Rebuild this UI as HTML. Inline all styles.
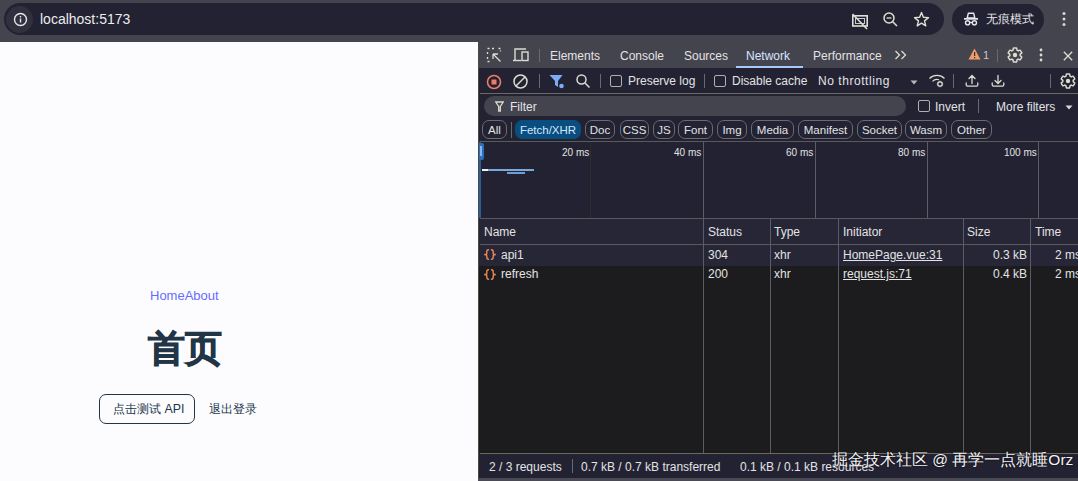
<!DOCTYPE html>
<html><head><meta charset="utf-8">
<style>
*{margin:0;padding:0;box-sizing:border-box}
html,body{width:1078px;height:481px;overflow:hidden}
body{position:relative;background:#44444f;font-family:"Liberation Sans",sans-serif;color:#e3e3e3}
.a{position:absolute}
.t{position:absolute;white-space:nowrap;line-height:1}
/* top bar */
#omni{left:4px;top:3px;width:940px;height:32px;border-radius:16px;background:#222233}
#incog{left:952px;top:4px;width:92px;height:31px;border-radius:16px;background:#222233}
/* page */
#page{left:0;top:42px;width:478px;height:439px;background:#fcfcff;color:#213547}
.vl{position:absolute;width:1px;background:#5c5c66}
.chip{position:absolute;top:78px;height:19px;border:1px solid #6a6a70;border-radius:7px;font-size:11.5px;line-height:19px;text-align:center;color:#e3e3e3}
.dt{font-size:12px}
</style></head>
<body>
<!-- Browser toolbar -->
<div class="a" id="omni"></div>
<div class="a" style="left:6px;top:6px;width:27px;height:27px;border-radius:50%;background:#30303f"></div>
<svg class="a" style="left:13px;top:12px" width="15" height="15" viewBox="0 0 15 15"><circle cx="7.5" cy="7.5" r="6" fill="none" stroke="#e8e8e8" stroke-width="1.4"/><rect x="6.8" y="6.5" width="1.4" height="4" fill="#e8e8e8"/><rect x="6.8" y="4" width="1.4" height="1.4" fill="#e8e8e8"/></svg>
<div class="t" style="left:40px;top:12px;font-size:14px;color:#ececec">localhost:5173</div>
<!-- omnibox right icons -->
<svg class="a" style="left:850px;top:12px" width="20" height="19" viewBox="0 0 20 19"><rect x="2.8" y="3.8" width="14.4" height="10.2" fill="none" stroke="#e0e0d0" stroke-width="1.6"/><rect x="5.5" y="6.5" width="9" height="5" fill="none" stroke="#c8c8d8" stroke-width="1"/><line x1="2.5" y1="2" x2="17" y2="17" stroke="#e0e0d0" stroke-width="1.6"/></svg>
<svg class="a" style="left:882px;top:11px" width="18" height="18" viewBox="0 0 18 18"><circle cx="7" cy="7" r="5" fill="none" stroke="#e0e0d0" stroke-width="1.5"/><line x1="10.5" y1="10.5" x2="15" y2="15" stroke="#e0e0d0" stroke-width="1.5"/><line x1="4.5" y1="7" x2="9.5" y2="7" stroke="#e0e0d0" stroke-width="1.3"/></svg>
<svg class="a" style="left:913px;top:11px" width="17" height="17" viewBox="0 0 17 17"><polygon points="8.5,1.5 10.4,6.3 15.5,6.6 11.5,9.9 12.8,14.9 8.5,12.1 4.2,14.9 5.5,9.9 1.5,6.6 6.6,6.3" fill="none" stroke="#e0e0d0" stroke-width="1.4" stroke-linejoin="round"/></svg>
<div class="a" id="incog"></div>
<svg class="a" style="left:963px;top:12px" width="16" height="14" viewBox="0 0 16 14"><path d="M5.3 1.3H10.7L11.8 6H4.2Z" fill="none" stroke="#e8e8f0" stroke-width="1.4" stroke-linejoin="round"/><rect x="1" y="6" width="14" height="1.7" fill="#e8e8f0"/><circle cx="4.6" cy="10.8" r="2.1" fill="none" stroke="#e8e8f0" stroke-width="1.4"/><circle cx="11.4" cy="10.8" r="2.1" fill="none" stroke="#e8e8f0" stroke-width="1.4"/><path d="M6.7 10.5h2.6" stroke="#e8e8f0" stroke-width="1.2"/></svg>
<div class="t" style="left:986px;top:13px;font-size:12px;color:#e8e8e8">无痕模式</div>
<svg class="a" style="left:1062px;top:11px" width="4" height="16" viewBox="0 0 4 16"><circle cx="2" cy="2.5" r="1.5" fill="#d8d8d8"/><circle cx="2" cy="8" r="1.5" fill="#d8d8d8"/><circle cx="2" cy="13.5" r="1.5" fill="#d8d8d8"/></svg>

<!-- Page -->
<div class="a" id="page">
  <div class="t" style="left:150px;top:247px;font-size:13px;color:#646cff">HomeAbout</div>
  <div class="t" style="left:148px;top:288px;font-size:37px;font-weight:bold;color:#213547;-webkit-text-stroke:0.9px #213547">首页</div>
  <div class="a" style="left:99px;top:352px;width:96px;height:30px;border:1.5px solid #213547;border-radius:7px;background:#fcfcff"></div>
  <div class="t" style="left:113px;top:361px;font-size:12.4px;color:#213547">点击测试 API</div>
  <div class="t" style="left:209px;top:361px;font-size:12.4px;color:#213547">退出登录</div>
</div>

<!-- DevTools -->
<div class="a" style="left:478px;top:42px;width:600px;height:439px;background:#1c1c1f"></div>
<!-- tab bar -->
<div class="a" style="left:478px;top:42px;width:600px;height:26px;background:#44444f"></div>
<div class="a" style="left:478px;top:42px;width:1px;height:439px;background:#4a4a40"></div>
<!-- toolbar/filter/chips/overview/header -->
<div class="a" style="left:479px;top:68px;width:599px;height:151px;background:#222233"></div>
<div class="a" style="left:479px;top:219px;width:599px;height:47px;background:#262636"></div>
<div class="a" style="left:479px;top:453px;width:599px;height:25px;background:#222233"></div>
<div class="a" style="left:478px;top:478px;width:600px;height:3px;background:#4a4a55"></div>
<!-- lines -->
<div class="a" style="left:480px;top:93px;width:598px;height:1px;background:#6a6a5a"></div>
<div class="a" style="left:480px;top:141px;width:598px;height:1px;background:#5a5a5a"></div>
<div class="a" style="left:480px;top:218px;width:598px;height:1px;background:#5a5a5a"></div>
<div class="a" style="left:480px;top:244px;width:598px;height:1px;background:#5a5a5a"></div>
<div class="a" style="left:480px;top:453px;width:598px;height:1px;background:#6a6a5a"></div>
<!-- filter pill -->
<div class="a" style="left:484px;top:96px;width:422px;height:20px;border-radius:10px;background:#44444f"></div>
<!-- tab bar content -->
<svg class="a" style="left:486px;top:47px" width="16" height="16" viewBox="0 0 16 16" fill="none" stroke="#dcdcd0" stroke-width="1.3"><path d="M1.5 1.5h2M6 1.5h2M1.5 5v2M1.5 10v2M1.5 14.5h2M12.5 1.5h2M14.5 3.5v1" stroke-dasharray="none"/><path d="M7 7l7.5 7.5M7 7h5M7 7v5"/></svg>
<svg class="a" style="left:512px;top:47px" width="18" height="16" viewBox="0 0 18 16" fill="none" stroke="#dcdcd0" stroke-width="1.4"><path d="M3 13V2h11"/><path d="M1 13.5h8"/><rect x="10" y="5" width="6" height="8.5"/></svg>
<div class="a" style="left:539px;top:49px;width:1px;height:13px;background:#6a6a6a"></div>
<div class="t dt" style="left:550px;top:50px">Elements</div>
<div class="t dt" style="left:620px;top:50px">Console</div>
<div class="t dt" style="left:684px;top:50px">Sources</div>
<div class="t dt" style="left:746px;top:50px;color:#d8e4ff">Network</div>
<div class="a" style="left:736px;top:66px;width:67px;height:2px;background:#a8c7fa"></div>
<div class="t dt" style="left:813px;top:50px">Performance</div>
<svg class="a" style="left:894px;top:50px" width="14" height="10" viewBox="0 0 14 10" fill="none" stroke="#dcdcd0" stroke-width="1.3"><path d="M1.5 1l4 4-4 4M7.5 1l4 4-4 4"/></svg>
<svg class="a" style="left:968px;top:48px" width="13" height="12" viewBox="0 0 13 12"><path d="M6.5 0.5L12.5 11.5H0.5Z" fill="#f29b6b"/><rect x="6" y="4" width="1.2" height="4" fill="#3a2a20"/><rect x="6" y="9" width="1.2" height="1.2" fill="#3a2a20"/></svg>
<div class="t dt" style="left:983px;top:50px;font-size:11px;color:#c8c8c8">1</div>
<div class="a" style="left:997px;top:49px;width:1px;height:13px;background:#6a6a6a"></div>
<svg class="a" style="left:1007px;top:47px" width="16" height="16" viewBox="1 1 22 22" fill="none" stroke="#dcdcd0" stroke-width="2"><path d="M19.14,12.94c0.04-0.3,0.06-0.61,0.06-0.94c0-0.32-0.02-0.64-0.07-0.94l2.03-1.58c0.18-0.14,0.23-0.41,0.12-0.61l-1.92-3.32c-0.12-0.22-0.37-0.29-0.59-0.22l-2.39,0.96c-0.5-0.38-1.03-0.7-1.62-0.94L14.4,2.81c-0.04-0.24-0.24-0.41-0.48-0.41h-3.84c-0.24,0-0.43,0.17-0.47,0.41L9.25,5.35C8.66,5.59,8.12,5.92,7.63,6.29L5.24,5.330c-0.22-0.08-0.47,0-0.59,0.22L2.74,8.87C2.62,9.08,2.66,9.34,2.86,9.48l2.03,1.58C4.84,11.360,4.8,11.690,4.8,12s0.02,0.64,0.07,0.94l-2.03,1.58c-0.18,0.14-0.23,0.41-0.12,0.61l1.92,3.32c0.12,0.22,0.37,0.29,0.59,0.22l2.39-0.96c0.5,0.38,1.03,0.7,1.62,0.94l0.36,2.54c0.05,0.24,0.24,0.41,0.48,0.41h3.84c0.24,0,0.44-0.17,0.47-0.41l0.36-2.540c0.59-0.24,1.13-0.56,1.62-0.94l2.39,0.96c0.22,0.08,0.47,0,0.59-0.22l1.92-3.32c0.12-0.22,0.07-0.47-0.12-0.61L19.14,12.94z"/><circle cx="12" cy="12" r="3" fill="#dcdcd0" stroke="none"/></svg>
<svg class="a" style="left:1039px;top:48px" width="4" height="14" viewBox="0 0 4 14"><circle cx="2" cy="2" r="1.4" fill="#dcdcd0"/><circle cx="2" cy="7" r="1.4" fill="#dcdcd0"/><circle cx="2" cy="12" r="1.4" fill="#dcdcd0"/></svg>
<svg class="a" style="left:1063px;top:51px" width="10" height="10" viewBox="0 0 10 10" stroke="#dcdcd0" stroke-width="1.3"><path d="M0.8 0.8l8.4 8.4M9.2 0.8l-8.4 8.4"/></svg>

<!-- network toolbar -->
<svg class="a" style="left:486px;top:74px" width="16" height="16" viewBox="0 0 16 16"><circle cx="8" cy="8" r="6.5" fill="none" stroke="#ee7b66" stroke-width="1.6"/><rect x="5.5" y="5.5" width="5" height="5" rx="0.5" fill="#ee7b66"/></svg>
<svg class="a" style="left:512px;top:73px" width="17" height="17" viewBox="0 0 17 17" fill="none" stroke="#dcdcd0" stroke-width="1.5"><circle cx="8.5" cy="8.5" r="6.5"/><path d="M4 13L13 4"/></svg>
<div class="a" style="left:539px;top:74px;width:1px;height:14px;background:#6a6a6a"></div>
<svg class="a" style="left:549px;top:74px" width="16" height="15" viewBox="0 0 16 15"><path d="M0.5 1h13L9 7v6L6 11V7Z" fill="#7cacf8"/><circle cx="12.5" cy="12" r="2.3" fill="#7cacf8"/></svg>
<svg class="a" style="left:575px;top:73px" width="16" height="16" viewBox="0 0 16 16" fill="none" stroke="#dcdcd0" stroke-width="1.5"><circle cx="6.5" cy="6.5" r="4.5"/><path d="M10 10l4.5 4.5"/></svg>
<div class="a" style="left:600px;top:74px;width:1px;height:14px;background:#6a6a6a"></div>
<div class="a" style="left:610px;top:75px;width:12px;height:12px;border:1.5px solid #b0b0b0;border-radius:2px"></div>
<div class="t dt" style="left:628px;top:75px">Preserve log</div>
<div class="a" style="left:704px;top:74px;width:1px;height:14px;background:#6a6a6a"></div>
<div class="a" style="left:714px;top:75px;width:12px;height:12px;border:1.5px solid #b0b0b0;border-radius:2px"></div>
<div class="t dt" style="left:732px;top:75px">Disable cache</div>
<div class="t dt" style="left:818px;top:75px;letter-spacing:0.55px">No throttling</div>
<svg class="a" style="left:910px;top:80px" width="8" height="5" viewBox="0 0 8 5"><path d="M0.5 0.5h7L4 4.5Z" fill="#b8b8b8"/></svg>
<svg class="a" style="left:928px;top:73px" width="18" height="15" viewBox="0 0 18 15" fill="none" stroke="#dcdcd0" stroke-width="1.2"><path d="M1.5 5.5a10.5 10.5 0 0 1 15 0"/><path d="M4.5 8.3a6 6 0 0 1 6.5-1.5"/><circle cx="12" cy="11" r="2.2"/><path d="M12 7.8v1M12 13.2v1M8.8 11h1M14.2 11h1M9.8 8.8l.7.7M13.5 12.5l.7.7M9.8 13.2l.7-.7M13.5 9.5l.7-.7"/></svg>
<div class="a" style="left:953px;top:74px;width:1px;height:14px;background:#6a6a6a"></div>
<svg class="a" style="left:965px;top:74px" width="14" height="14" viewBox="0 0 14 14" fill="none" stroke="#dcdcd0" stroke-width="1.3" stroke-linecap="round"><path d="M7 9.5V1.5M4 4.5L7 1.5l3 3M1.2 9v1.8c0 .8.5 1.3 1.3 1.3h9c.8 0 1.3-.5 1.3-1.3V9"/></svg>
<svg class="a" style="left:991px;top:74px" width="14" height="14" viewBox="0 0 14 14" fill="none" stroke="#dcdcd0" stroke-width="1.3" stroke-linecap="round"><path d="M7 1.5v8M4 6.5l3 3 3-3M1.2 9v1.8c0 .8.5 1.3 1.3 1.3h9c.8 0 1.3-.5 1.3-1.3V9"/></svg>
<div class="a" style="left:1050px;top:74px;width:1px;height:14px;background:#6a6a6a"></div>
<svg class="a" style="left:1060px;top:73px" width="16" height="16" viewBox="1 1 22 22" fill="none" stroke="#dcdcd0" stroke-width="2"><path d="M19.14,12.94c0.04-0.3,0.06-0.61,0.06-0.94c0-0.32-0.02-0.64-0.07-0.94l2.03-1.58c0.18-0.14,0.23-0.41,0.12-0.61l-1.92-3.32c-0.12-0.22-0.37-0.29-0.59-0.22l-2.39,0.96c-0.5-0.38-1.03-0.7-1.62-0.94L14.4,2.81c-0.04-0.24-0.24-0.41-0.48-0.41h-3.84c-0.24,0-0.43,0.17-0.47,0.41L9.25,5.35C8.66,5.59,8.12,5.92,7.63,6.29L5.24,5.330c-0.22-0.08-0.47,0-0.59,0.22L2.74,8.87C2.62,9.08,2.66,9.34,2.86,9.48l2.03,1.58C4.84,11.360,4.8,11.690,4.8,12s0.02,0.64,0.07,0.94l-2.03,1.58c-0.18,0.14-0.23,0.41-0.12,0.61l1.92,3.32c0.12,0.22,0.37,0.29,0.59,0.22l2.39-0.96c0.5,0.38,1.03,0.7,1.62,0.94l0.36,2.54c0.05,0.24,0.24,0.41,0.48,0.41h3.84c0.24,0,0.44-0.17,0.47-0.41l0.36-2.540c0.59-0.24,1.13-0.56,1.62-0.94l2.39,0.96c0.22,0.08,0.47,0,0.59-0.22l1.92-3.32c0.12-0.22,0.07-0.47-0.12-0.61L19.14,12.94z"/><circle cx="12" cy="12" r="3" fill="#dcdcd0" stroke="none"/></svg>

<!-- filter row -->
<svg class="a" style="left:495px;top:101px" width="9" height="11" viewBox="0 0 9 11" fill="none" stroke="#dcdcd0" stroke-width="1.3"><path d="M0.7 1h7.6L5.3 5.5V10H3.7V5.5Z"/></svg>
<div class="t dt" style="left:510px;top:101px">Filter</div>
<div class="a" style="left:918px;top:100px;width:12px;height:12px;border:1.5px solid #b0b0b0;border-radius:2px"></div>
<div class="t dt" style="left:935px;top:101px">Invert</div>
<div class="a" style="left:978px;top:99px;width:1px;height:14px;background:#6a6a6a"></div>
<div class="t dt" style="left:996px;top:101px">More filters</div>
<svg class="a" style="left:1065px;top:105px" width="8" height="5" viewBox="0 0 8 5"><path d="M0.5 0.5h7L4 4.5Z" fill="#d8d8d8"/></svg>

<!-- chips -->
<div class="chip" style="left:482px;top:120px;width:25px">All</div>
<div class="a" style="left:511px;top:122px;width:1px;height:16px;background:#6a6a6a"></div>
<div class="chip" style="left:515px;top:120px;width:66px;background:#0a4e80;border-color:#0a4e80;color:#d0e8ff">Fetch/XHR</div>
<div class="chip" style="left:585px;top:120px;width:30px">Doc</div>
<div class="chip" style="left:620px;top:120px;width:29px">CSS</div>
<div class="chip" style="left:653px;top:120px;width:22px">JS</div>
<div class="chip" style="left:678px;top:120px;width:35px">Font</div>
<div class="chip" style="left:717px;top:120px;width:30px">Img</div>
<div class="chip" style="left:751px;top:120px;width:43px">Media</div>
<div class="chip" style="left:798px;top:120px;width:55px">Manifest</div>
<div class="chip" style="left:857px;top:120px;width:45px">Socket</div>
<div class="chip" style="left:905px;top:120px;width:42px">Wasm</div>
<div class="chip" style="left:951px;top:120px;width:41px">Other</div>

<!-- overview -->
<div class="vl" style="left:590px;top:142px;height:76px;background:#2e2e30"></div>
<div class="vl" style="left:703px;top:142px;height:76px"></div>
<div class="vl" style="left:815px;top:142px;height:76px"></div>
<div class="vl" style="left:927px;top:142px;height:76px"></div>
<div class="vl" style="left:1038px;top:142px;height:76px"></div>
<div class="t" style="left:562px;top:148px;font-size:10px">20 ms</div>
<div class="t" style="left:674px;top:148px;font-size:10px">40 ms</div>
<div class="t" style="left:786px;top:148px;font-size:10px">60 ms</div>
<div class="t" style="left:898px;top:148px;font-size:10px">80 ms</div>
<div class="t" style="left:1004px;top:148px;font-size:10px">100 ms</div>
<div class="a" style="left:479px;top:142px;width:2px;height:76px;background:#2a5f9a"></div>
<div class="a" style="left:479px;top:143px;width:5px;height:17px;border-radius:2px;background:#2d6fb8"></div>
<div class="a" style="left:480px;top:146px;width:2px;height:10px;background:#8ab4f8"></div>
<div class="a" style="left:482px;top:169px;width:52px;height:2px;background:#7aa8d8"></div>
<div class="a" style="left:482px;top:169px;width:6px;height:2px;background:#f0f0f0"></div>
<div class="a" style="left:507px;top:172px;width:18px;height:2px;background:#6aa0d8"></div>

<!-- table header -->
<div class="t dt" style="left:484px;top:226px">Name</div>
<div class="t dt" style="left:708px;top:226px">Status</div>
<div class="t dt" style="left:774px;top:226px">Type</div>
<div class="t dt" style="left:843px;top:226px">Initiator</div>
<div class="t dt" style="left:967px;top:226px">Size</div>
<div class="t dt" style="left:1035px;top:226px">Time</div>
<div class="vl" style="left:703px;top:219px;height:234px"></div>
<div class="vl" style="left:770px;top:219px;height:234px"></div>
<div class="vl" style="left:838px;top:219px;height:234px"></div>
<div class="vl" style="left:963px;top:219px;height:234px"></div>
<div class="vl" style="left:1030px;top:219px;height:234px"></div>
<!-- rows -->
<svg class="a" style="left:483px;top:249px" width="14" height="11" viewBox="0 0 14 11" fill="none" stroke="#ee8a5a" stroke-width="1.4" stroke-linecap="round"><path d="M5.5 0.8C4 0.8 3.8 1.6 3.8 3v1.2C3.8 5 3 5.5 1.2 5.5 3 5.5 3.8 6 3.8 6.8V8c0 1.4.2 2.2 1.7 2.2"/><path d="M8.5 0.8c1.5 0 1.7.8 1.7 2.2v1.2c0 .8.8 1.3 2.6 1.3-1.8 0-2.6.5-2.6 1.3V8c0 1.4-.2 2.2-1.7 2.2"/></svg>
<div class="t dt" style="left:501px;top:249px">api1</div>
<div class="t dt" style="left:708px;top:249px">304</div>
<div class="t dt" style="left:774px;top:249px">xhr</div>
<div class="t dt" style="left:843px;top:249px;text-decoration:underline">HomePage.vue:31</div>
<div class="t dt" style="left:993px;top:249px">0.3 kB</div>
<div class="t dt" style="left:1055px;top:249px">2 ms</div>
<svg class="a" style="left:483px;top:269px" width="14" height="11" viewBox="0 0 14 11" fill="none" stroke="#ee8a5a" stroke-width="1.4" stroke-linecap="round"><path d="M5.5 0.8C4 0.8 3.8 1.6 3.8 3v1.2C3.8 5 3 5.5 1.2 5.5 3 5.5 3.8 6 3.8 6.8V8c0 1.4.2 2.2 1.7 2.2"/><path d="M8.5 0.8c1.5 0 1.7.8 1.7 2.2v1.2c0 .8.8 1.3 2.6 1.3-1.8 0-2.6.5-2.6 1.3V8c0 1.4-.2 2.2-1.7 2.2"/></svg>
<div class="t dt" style="left:501px;top:268px">refresh</div>
<div class="t dt" style="left:708px;top:268px">200</div>
<div class="t dt" style="left:774px;top:268px">xhr</div>
<div class="t dt" style="left:843px;top:268px;text-decoration:underline">request.js:71</div>
<div class="t dt" style="left:993px;top:268px">0.4 kB</div>
<div class="t dt" style="left:1055px;top:268px">2 ms</div>

<!-- status bar -->
<div class="t dt" style="left:489px;top:461px">2 / 3 requests</div>
<div class="a" style="left:572px;top:459px;width:1px;height:14px;background:#6a6a6a"></div>
<div class="t dt" style="left:581px;top:461px">0.7 kB / 0.7 kB transferred</div>
<div class="t dt" style="left:740px;top:461px">0.1 kB / 0.1 kB resources</div>
<div class="t" style="left:832px;top:452px;font-size:15.5px;color:#f4f4f4;text-shadow:0 0 2px #000">掘金技术社区 @ 再学一点就睡Orz</div>
</body></html>
